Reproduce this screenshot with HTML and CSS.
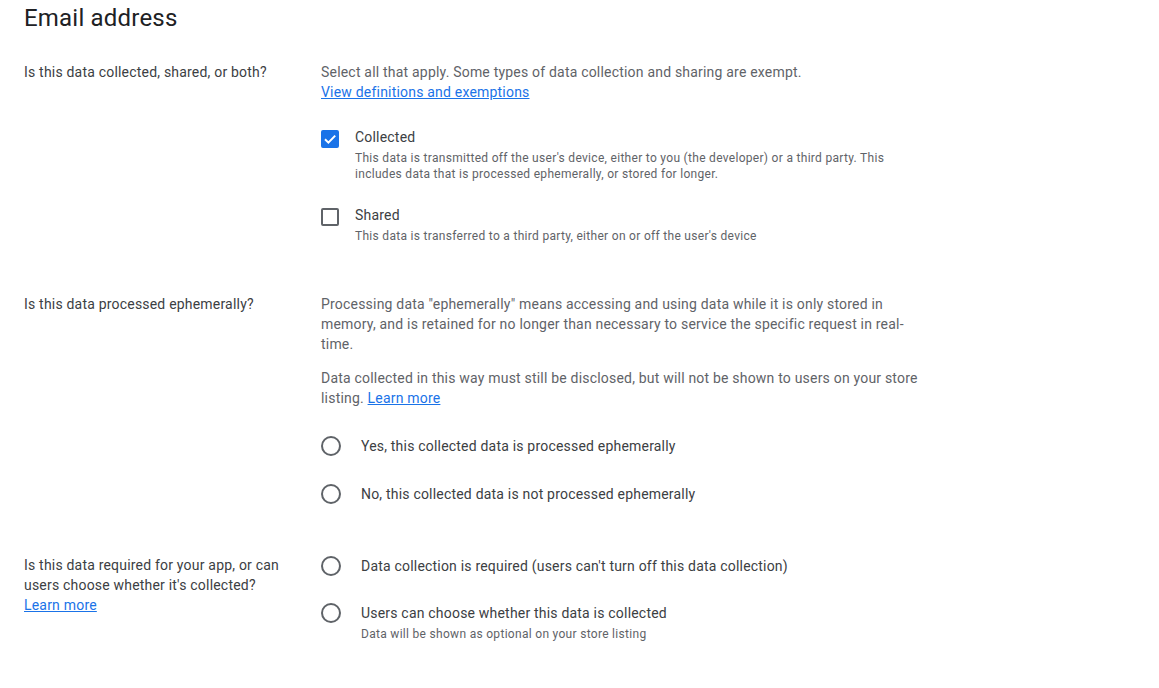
FILE: index.html
```html
<!DOCTYPE html>
<html lang="en">
<head>
<meta charset="utf-8">
<title>Email address</title>
<link rel="stylesheet" href="styles.css">
</head>
<body>
<main class="page">
  <h1 class="title">Email address</h1>

  <section class="row row-collected">
    <div class="question">Is this data collected, shared, or both?</div>
    <div class="answer">
      <p class="text">Select all that apply. Some types of data collection and sharing are exempt.<br><a href="#" class="link">View definitions and exemptions</a></p>
      <div class="options">
        <div class="check-option">
          <span class="checkbox checked">
            <svg viewBox="0 0 18 18" width="18" height="18"><path d="M4 9.3 L7.4 12.6 L14.2 5.6" fill="none" stroke="#fff" stroke-width="2"/></svg>
          </span>
          <div class="option-body">
            <div class="option-label">Collected</div>
            <div class="option-desc">This data is transmitted off the user's device, either to you (the developer) or a third party. This includes data that is processed ephemerally, or stored for longer.</div>
          </div>
        </div>
        <div class="check-option">
          <span class="checkbox"></span>
          <div class="option-body">
            <div class="option-label">Shared</div>
            <div class="option-desc">This data is transferred to a third party, either on or off the user's device</div>
          </div>
        </div>
      </div>
    </div>
  </section>

  <section class="row row-ephemeral">
    <div class="question">Is this data processed ephemerally?</div>
    <div class="answer">
      <p class="text">Processing data "ephemerally" means accessing and using data while it is only stored in memory, and is retained for no longer than necessary to service the specific request in real-time.</p>
      <p class="text text-second">Data collected in this way must still be disclosed, but will not be shown to users on your store listing. <a href="#" class="link">Learn more</a></p>
      <div class="radios radios-ephemeral">
        <div class="radio-option">
          <span class="radio"></span>
          <div class="option-body"><div class="radio-label">Yes, this collected data is processed ephemerally</div></div>
        </div>
        <div class="radio-option">
          <span class="radio"></span>
          <div class="option-body"><div class="radio-label">No, this collected data is not processed ephemerally</div></div>
        </div>
      </div>
    </div>
  </section>

  <section class="row row-required">
    <div class="question">Is this data required for your app, or can users choose whether it's collected?<br><a href="#" class="link">Learn more</a></div>
    <div class="answer">
      <div class="radios radios-required">
        <div class="radio-option">
          <span class="radio"></span>
          <div class="option-body"><div class="radio-label">Data collection is required (users can't turn off this data collection)</div></div>
        </div>
        <div class="radio-option">
          <span class="radio"></span>
          <div class="option-body">
            <div class="radio-label">Users can choose whether this data is collected</div>
            <div class="option-desc">Data will be shown as optional on your store listing</div>
          </div>
        </div>
      </div>
    </div>
  </section>
</main>
</body>
</html>
```

FILE: styles.css
```css
html, body {
  margin: 0;
  padding: 0;
  background: #ffffff;
}

body {
  font-family: Roboto, "Liberation Sans", Arial, sans-serif;
  color: #3c4043;
  font-size: 14px;
  line-height: 20px;
  letter-spacing: 0.2px;
}

.page {
  padding: 2px 24px 0 24px;
}

.title {
  margin: 0;
  font-size: 24px;
  line-height: 32px;
  font-weight: 400;
  color: #202124;
  letter-spacing: 0.2px;
}

.row {
  display: grid;
  grid-template-columns: 297px 600px;
}

.row-collected {
  margin-top: 28px;
}

.row-ephemeral {
  margin-top: 50px;
}

.row-required {
  margin-top: 51px;
}

.question {
  max-width: 265px;
  color: #3c4043;
}

.text {
  margin: 0;
  color: #5f6368;
}

.text-second {
  margin-top: 14px;
}

.link {
  color: #1a73e8;
  text-decoration: underline;
}

.options {
  display: flex;
  flex-direction: column;
  gap: 23px;
  margin-top: 25px;
}

.check-option,
.radio-option {
  display: flex;
  align-items: flex-start;
}

.checkbox {
  flex: none;
  width: 18px;
  height: 18px;
  box-sizing: border-box;
  border: 2px solid #5f6368;
  border-radius: 2px;
  margin-top: 3px;
  margin-right: 16px;
  display: flex;
}

.checkbox.checked {
  background: #1a73e8;
  border-color: #1a73e8;
}

.checkbox.checked svg {
  margin: -2px;
}

.option-label,
.radio-label {
  color: #3c4043;
}

.option-desc {
  margin-top: 3px;
  font-size: 12px;
  line-height: 16px;
  letter-spacing: 0.3px;
  color: #5f6368;
}

.radios {
  display: flex;
  flex-direction: column;
}

.radios-ephemeral {
  margin-top: 28px;
  gap: 28px;
}

.radios-required {
  margin-top: 1px;
  gap: 27px;
}

.radio {
  flex: none;
  width: 20px;
  height: 20px;
  box-sizing: border-box;
  border: 2px solid #5f6368;
  border-radius: 50%;
  margin-right: 20px;
}
```
